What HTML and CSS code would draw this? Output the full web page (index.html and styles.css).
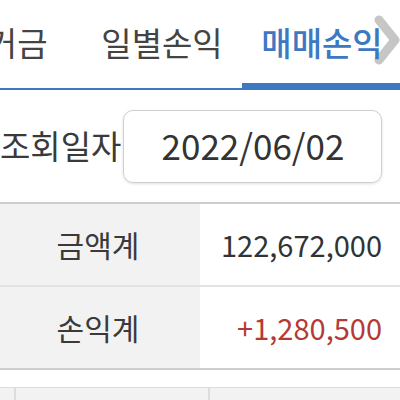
FILE: index.html
```html
<!DOCTYPE html>
<html>
<head>
  <title>매매손익</title>
  <link rel="stylesheet" href="styles.css">
</head>
<body>
  <div class="tab-bar">
    <ul class="tabs">
      <li class="tab"><span>증거금</span></li>
      <li class="tab"><span>일별손익</span></li>
      <li class="tab active"><span>매매손익</span></li>
    </ul>
    <svg class="tab-next" width="30" height="52" viewBox="0 0 30 52">
      <polyline points="6,6 22,26 6,46" fill="none" stroke="#c6c6c6" stroke-width="9" stroke-linecap="round" stroke-linejoin="round"/>
    </svg>
  </div>

  <div class="search-row">
    <label class="search-label">조회일자</label>
    <div class="date-box">2022/06/02</div>
  </div>

  <table class="summary">
    <tr>
      <th>금액계</th>
      <td>122,672,000</td>
    </tr>
    <tr>
      <th>손익계</th>
      <td class="plus">+1,280,500</td>
    </tr>
  </table>

  <!-- detail list header -->
  <div class="list-head">
    <div class="col-check"></div>
    <div class="col-name"></div>
    <div class="col-rest"></div>
  </div>
</body>
</html>
```

FILE: styles.css
```css
body {
  margin: 0;
  font-family: "Noto Sans CJK KR", "Noto Sans", sans-serif;
  color: #3a3a3a;
  background: #fff;
  overflow: hidden;
}

/* tabs */
.tab-bar {
  position: relative;
  overflow: hidden;
  border-bottom: 2px solid #3d78c3;
}

.tabs {
  list-style: none;
  margin: 0 0 0 -78px;
  padding: 0;
  display: flex;
}

.tab {
  flex: 0 0 160px;
  height: 88px;
  display: flex;
  align-items: center;
  justify-content: center;
  font-size: 33px;
  color: #444;
  padding-bottom: 5px;
  box-sizing: border-box;
}

.tab span {
  position: relative;
  z-index: 1;
}

.tab.active {
  color: #3d78c3;
  font-weight: 500;
  box-shadow: inset 0 -5px 0 #3d78c3;
}

.tab-next {
  position: absolute;
  left: 373px;
  top: 14px;
}

/* date row */
.search-row {
  display: flex;
  align-items: center;
  padding: 20px 0 19px 0;
}

.search-label {
  font-size: 33px;
  padding-bottom: 3px;
}

.date-box {
  margin-left: 2px;
  width: 259px;
  height: 73px;
  box-sizing: border-box;
  border: 1px solid #cfcfcf;
  border-radius: 10px;
  box-shadow: 0 1px 3px rgba(0, 0, 0, 0.12);
  display: flex;
  align-items: center;
  justify-content: center;
  padding-bottom: 5px;
  font-size: 35px;
  color: #333;
}

/* summary table */
.summary {
  width: 100%;
  border-collapse: collapse;
  border-top: 2px solid #cdcdcd;
  border-bottom: 2px solid #cdcdcd;
}

.summary th {
  width: 200px;
  height: 83px;
  box-sizing: border-box;
  background: #f2f2f2;
  font-weight: normal;
  font-size: 30px;
  text-align: center;
  padding: 0 4px 2px 0;
}

.summary td {
  font-size: 29px;
  text-align: right;
  padding: 0 18px 2px 0;
  color: #333;
}

.summary tr + tr th,
.summary tr + tr td {
  border-top: 2px solid #e2e2e2;
}

.summary .plus {
  color: #b33a37;
}

/* list header */
.list-head {
  margin-top: 17px;
  display: flex;
  height: 40px;
  background: #f2f2f2;
  border-top: 1px solid #dcdcdc;
}

.col-check {
  width: 14px;
  border-right: 2px solid #dcdcdc;
}

.col-name {
  width: 192px;
  border-right: 2px solid #dcdcdc;
}

.col-rest {
  flex: 1;
}
```
